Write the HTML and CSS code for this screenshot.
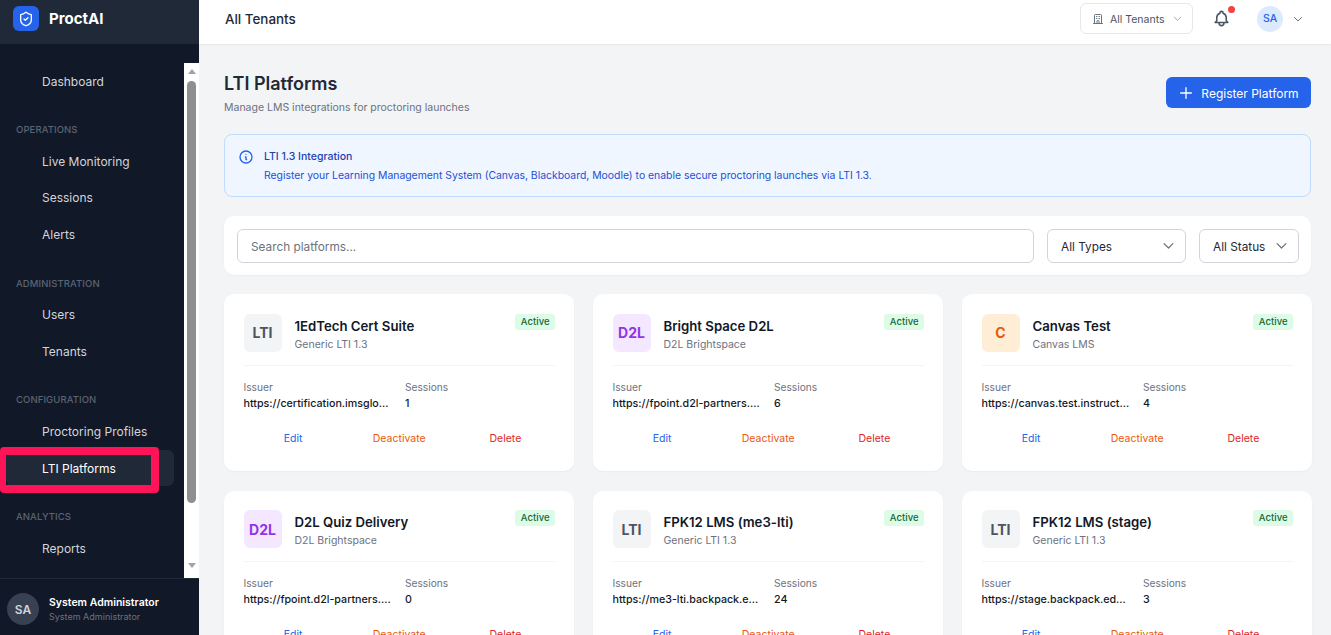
FILE: index.html
```html
<!DOCTYPE html>
<html lang="en">
<head>
    <meta charset="UTF-8">
    <meta name="viewport" content="width=device-width, initial-scale=1.0">
    <title>LTI Platforms</title>
    <link rel="stylesheet" href="styles.css">
</head>
<body>

<div class="app">
    <aside class="sidebar">
        <div class="brand">
            <div class="brand-logo">
                <svg viewBox="0 0 24 24" width="16" height="16" fill="none" stroke="#fff" stroke-width="2" stroke-linecap="round" stroke-linejoin="round"><path d="M20 13c0 5-3.5 7.5-7.66 8.95a1 1 0 0 1-.67-.01C7.5 20.5 4 18 4 13V6a1 1 0 0 1 1-1c2 0 4.5-1.2 6.24-2.72a1.17 1.17 0 0 1 1.52 0C14.51 3.81 17 5 19 5a1 1 0 0 1 1 1z"/><path d="m9 12 2 2 4-4"/></svg>
            </div>
            <span class="brand-name">ProctAI</span>
        </div>

        <div class="nav-wrap">
            <nav class="nav">
                <a class="nav-item">Dashboard</a>
                <div class="nav-label">OPERATIONS</div>
                <a class="nav-item">Live Monitoring</a>
                <a class="nav-item">Sessions</a>
                <a class="nav-item">Alerts</a>
                <div class="nav-label">ADMINISTRATION</div>
                <a class="nav-item">Users</a>
                <a class="nav-item">Tenants</a>
                <div class="nav-label">CONFIGURATION</div>
                <a class="nav-item">Proctoring Profiles</a>
                <a class="nav-item active">LTI Platforms</a>
                <div class="nav-label">ANALYTICS</div>
                <a class="nav-item">Reports</a>
            </nav>
            <div class="scrollbar">
                <span class="arrow-up"></span>
                <span class="thumb"></span>
                <span class="arrow-down"></span>
            </div>
        </div>

        <div class="user-box">
            <div class="user-avatar">SA</div>
            <div>
                <div class="user-name">System Administrator</div>
                <div class="user-role">System Administrator</div>
            </div>
        </div>
    </aside>

    <div class="highlight"></div>

    <div class="content">
        <header class="topbar">
            <div class="topbar-title">All Tenants</div>
            <div class="topbar-right">
                <div class="tenant-select">
                    <svg viewBox="0 0 24 24" width="12" height="12" fill="none" stroke="#6b7280" stroke-width="2" stroke-linecap="round" stroke-linejoin="round"><path d="M19 21V5a2 2 0 00-2-2H7a2 2 0 00-2 2v16m14 0h2m-2 0h-5m-9 0H3m2 0h5M9 7h1m-1 4h1m4-4h1m-1 4h1m-5 10v-5a1 1 0 011-1h2a1 1 0 011 1v5m-4 0h4"/></svg>
                    <span>All Tenants</span>
                    <svg viewBox="0 0 24 24" width="11" height="11" fill="none" stroke="#9ca3af" stroke-width="2" stroke-linecap="round" stroke-linejoin="round"><path d="M19 9l-7 7-7-7"/></svg>
                </div>
                <div class="bell">
                    <svg viewBox="0 0 24 24" width="19" height="19" fill="none" stroke="#4b5563" stroke-width="2" stroke-linecap="round" stroke-linejoin="round"><path d="M15 17h5l-1.405-1.405A2.032 2.032 0 0118 14.158V11a6.002 6.002 0 00-4-5.659V5a2 2 0 10-4 0v.341C7.67 6.165 6 8.388 6 11v3.159c0 .538-.214 1.055-.595 1.436L4 17h5m6 0v1a3 3 0 11-6 0v-1m6 0H9"/></svg>
                    <span class="bell-dot"></span>
                </div>
                <div class="top-avatar">SA</div>
                <svg class="top-chevron" viewBox="0 0 24 24" width="12" height="12" fill="none" stroke="#6b7280" stroke-width="2" stroke-linecap="round" stroke-linejoin="round"><path d="M19 9l-7 7-7-7"/></svg>
            </div>
        </header>

        <main class="main">
            <div class="page-head">
                <div>
                    <h1>LTI Platforms</h1>
                    <p>Manage LMS integrations for proctoring launches</p>
                </div>
                <button class="primary-btn">
                    <svg viewBox="0 0 24 24" width="16" height="16" fill="none" stroke="#fff" stroke-width="2" stroke-linecap="round"><path d="M12 4v16m8-8H4"/></svg>
                    Register Platform
                </button>
            </div>

            <div class="info-box">
                <svg viewBox="0 0 24 24" width="16" height="16" fill="none" stroke="#2563eb" stroke-width="2" stroke-linecap="round" stroke-linejoin="round"><path d="M13 16h-1v-4h-1m1-4h.01M21 12a9 9 0 11-18 0 9 9 0 0118 0z"/></svg>
                <div>
                    <div class="info-title">LTI 1.3 Integration</div>
                    <div class="info-text">Register your Learning Management System (Canvas, Blackboard, Moodle) to enable secure proctoring launches via LTI 1.3.</div>
                </div>
            </div>

            <div class="filters">
                <div class="search">Search platforms...</div>
                <div class="select types">All Types
                    <svg viewBox="0 0 24 24" width="15" height="15" fill="none" stroke="#6b7280" stroke-width="2" stroke-linecap="round" stroke-linejoin="round"><path d="M19 9l-7 7-7-7"/></svg>
                </div>
                <div class="select status">All Status
                    <svg viewBox="0 0 24 24" width="15" height="15" fill="none" stroke="#6b7280" stroke-width="2" stroke-linecap="round" stroke-linejoin="round"><path d="M19 9l-7 7-7-7"/></svg>
                </div>
            </div>

            <div class="cards">
                <div class="card">
                    <div class="card-head">
                        <div class="logo logo-lti">LTI</div>
                        <div class="card-title">
                            <h3>1EdTech Cert Suite</h3>
                            <span>Generic LTI 1.3</span>
                        </div>
                        <span class="badge">Active</span>
                    </div>
                    <div class="card-info">
                        <div><label>Issuer</label><div class="val">https://certification.imsglobal.org</div></div>
                        <div><label>Sessions</label><div class="val">1</div></div>
                    </div>
                    <div class="actions"><a class="edit">Edit</a><a class="deact">Deactivate</a><a class="del">Delete</a></div>
                </div>

                <div class="card">
                    <div class="card-head">
                        <div class="logo logo-d2l">D2L</div>
                        <div class="card-title">
                            <h3>Bright Space D2L</h3>
                            <span>D2L Brightspace</span>
                        </div>
                        <span class="badge">Active</span>
                    </div>
                    <div class="card-info">
                        <div><label>Issuer</label><div class="val">https://fpoint.d2l-partners.brightspace.com</div></div>
                        <div><label>Sessions</label><div class="val">6</div></div>
                    </div>
                    <div class="actions"><a class="edit">Edit</a><a class="deact">Deactivate</a><a class="del">Delete</a></div>
                </div>

                <div class="card">
                    <div class="card-head">
                        <div class="logo logo-canvas">C</div>
                        <div class="card-title">
                            <h3>Canvas Test</h3>
                            <span>Canvas LMS</span>
                        </div>
                        <span class="badge">Active</span>
                    </div>
                    <div class="card-info">
                        <div><label>Issuer</label><div class="val">https://canvas.test.instructure.com</div></div>
                        <div><label>Sessions</label><div class="val">4</div></div>
                    </div>
                    <div class="actions"><a class="edit">Edit</a><a class="deact">Deactivate</a><a class="del">Delete</a></div>
                </div>

                <div class="card">
                    <div class="card-head">
                        <div class="logo logo-d2l">D2L</div>
                        <div class="card-title">
                            <h3>D2L Quiz Delivery</h3>
                            <span>D2L Brightspace</span>
                        </div>
                        <span class="badge">Active</span>
                    </div>
                    <div class="card-info">
                        <div><label>Issuer</label><div class="val">https://fpoint.d2l-partners.brightspace.com</div></div>
                        <div><label>Sessions</label><div class="val">0</div></div>
                    </div>
                    <div class="actions"><a class="edit">Edit</a><a class="deact">Deactivate</a><a class="del">Delete</a></div>
                </div>

                <div class="card">
                    <div class="card-head">
                        <div class="logo logo-lti">LTI</div>
                        <div class="card-title">
                            <h3>FPK12 LMS (me3-lti)</h3>
                            <span>Generic LTI 1.3</span>
                        </div>
                        <span class="badge">Active</span>
                    </div>
                    <div class="card-info">
                        <div><label>Issuer</label><div class="val">https://me3-lti.backpack.education</div></div>
                        <div><label>Sessions</label><div class="val">24</div></div>
                    </div>
                    <div class="actions"><a class="edit">Edit</a><a class="deact">Deactivate</a><a class="del">Delete</a></div>
                </div>

                <div class="card">
                    <div class="card-head">
                        <div class="logo logo-lti">LTI</div>
                        <div class="card-title">
                            <h3>FPK12 LMS (stage)</h3>
                            <span>Generic LTI 1.3</span>
                        </div>
                        <span class="badge">Active</span>
                    </div>
                    <div class="card-info">
                        <div><label>Issuer</label><div class="val">https://stage.backpack.education</div></div>
                        <div><label>Sessions</label><div class="val">3</div></div>
                    </div>
                    <div class="actions"><a class="edit">Edit</a><a class="deact">Deactivate</a><a class="del">Delete</a></div>
                </div>
            </div>
        </main>
    </div>
</div>

</body>
</html>
```

FILE: styles.css
```css
* {
    box-sizing: border-box;
}
html, body {
    margin: 0;
    height: 100%;
    overflow: hidden;
}
body {
    font-family: Inter, "Noto Sans", sans-serif;
    background-color: #f3f4f6;
    color: #111827;
}
.app {
    display: flex;
    height: 635px;
    position: relative;
}

/* sidebar */
.sidebar {
    width: 199px;
    flex-shrink: 0;
    display: flex;
    flex-direction: column;
    background-color: #111827;
}
.brand {
    height: 44px;
    display: flex;
    align-items: flex-start;
    gap: 10px;
    padding: 6px 13px 0;
    background-color: #1f2937;
}
.brand-logo {
    width: 26px;
    height: 25px;
    border-radius: 6px;
    background-color: #2563eb;
    display: flex;
    align-items: center;
    justify-content: center;
}
.brand-name {
    font-size: 15px;
    font-weight: 700;
    line-height: 25px;
    color: #fff;
}
.nav-wrap {
    flex: 1;
    display: flex;
    margin-top: 19px;
    min-height: 0;
}
.nav {
    flex: 1;
    padding: 0 10px 0 6px;
}
.nav-item {
    display: flex;
    align-items: center;
    height: 36px;
    margin-bottom: 0.8px;
    padding-left: 36px;
    border-radius: 6px;
    font-size: 12px;
    color: #d1d5db;
}
.nav-item.active {
    background-color: #1f2937;
    color: #fff;
}
.nav-label {
    margin: 25px 0 7px 10px;
    font-size: 9.5px;
    line-height: 12px;
    font-weight: 500;
    letter-spacing: 0.1px;
    color: #5b6472;
}
.scrollbar {
    width: 15px;
    background-color: #fff;
    display: flex;
    flex-direction: column;
    align-items: center;
}
.arrow-up, .arrow-down {
    width: 0;
    height: 0;
    border-left: 4px solid transparent;
    border-right: 4px solid transparent;
}
.arrow-up {
    margin-top: 6px;
    border-bottom: 5px solid #a3a3a3;
}
.arrow-down {
    margin-top: 60px;
    border-top: 5px solid #a3a3a3;
}
.thumb {
    width: 9px;
    height: 422px;
    margin-top: 7px;
    border-radius: 5px;
    background-color: #8f8f8f;
}
.user-box {
    height: 57px;
    display: flex;
    align-items: center;
    gap: 10px;
    padding: 4px 7px 0;
    border-top: 1px solid #1f2937;
}
.user-avatar {
    width: 32px;
    height: 32px;
    border-radius: 50%;
    background-color: #374151;
    color: #d1d5db;
    display: flex;
    align-items: center;
    justify-content: center;
    font-size: 12px;
    font-weight: 600;
}
.user-name {
    margin-top: 1px;
    font-size: 10.5px;
    font-weight: 600;
    line-height: 15px;
    color: #fff;
}
.user-role {
    font-size: 9px;
    line-height: 14px;
    color: #6b7280;
}

/* red box drawn over the nav */
.highlight {
    position: absolute;
    left: 0;
    top: 447px;
    width: 159px;
    height: 46px;
    border: 8px solid #ff1459;
    border-left-width: 6px;
    border-radius: 4px;
}

/* top bar */
.content {
    flex: 1;
    min-width: 0;
    display: flex;
    flex-direction: column;
}
.topbar {
    height: 44px;
    flex-shrink: 0;
    display: flex;
    align-items: center;
    justify-content: space-between;
    padding: 0 27px 7px 26px;
    background-color: #fff;
    box-shadow: 0 1px 2px rgba(0, 0, 0, 0.06);
    position: relative;
}
.topbar-title {
    font-size: 13.4px;
    font-weight: 500;
    color: #1f2937;
}
.topbar-right {
    display: flex;
    align-items: center;
}
.tenant-select {
    width: 113px;
    height: 31px;
    display: flex;
    align-items: center;
    gap: 6px;
    padding-left: 11px;
    border: 1px solid #e5e7eb;
    border-radius: 6px;
    font-size: 10.5px;
    color: #4b5563;
}
.tenant-select span {
    padding-top: 1px;
}
.tenant-select svg:last-child {
    margin-left: 1px;
}
.bell {
    margin-left: 19px;
    width: 19px;
    height: 19px;
    position: relative;
}
.bell svg {
    display: block;
}
.bell-dot {
    position: absolute;
    top: -3px;
    right: -4px;
    width: 7px;
    height: 7px;
    border-radius: 50%;
    background-color: #ef4444;
}
.top-avatar {
    width: 26px;
    height: 26px;
    margin-left: 26px;
    border-radius: 50%;
    background-color: #dbeafe;
    color: #2563eb;
    display: flex;
    align-items: center;
    justify-content: center;
    font-size: 10.5px;
    font-weight: 500;
}
.top-chevron {
    margin-left: 9px;
}

/* main */
.main {
    flex: 1;
    min-height: 0;
    overflow: hidden;
    padding: 28px 20px 0 25px;
}
.page-head {
    display: flex;
    justify-content: space-between;
    align-items: flex-start;
    margin-bottom: 18px;
}
.page-head h1 {
    margin: 0;
    font-size: 18px;
    line-height: 24px;
    font-weight: 600;
    color: #1f2937;
}
.page-head p {
    margin: 4px 0 0;
    font-size: 10.5px;
    line-height: 16px;
    color: #6b7280;
}
.primary-btn {
    width: 145px;
    height: 31px;
    margin-top: 5px;
    padding: 1px 0 0;
    display: flex;
    align-items: center;
    justify-content: center;
    gap: 7px;
    border: none;
    border-radius: 6px;
    background-color: #2563eb;
    color: white;
    font-family: inherit;
    font-size: 12px;
}
.primary-btn svg {
    margin-top: -1px;
}
.info-box {
    height: 63px;
    display: flex;
    align-items: flex-start;
    gap: 10px;
    padding: 14px 13px 0;
    margin-bottom: 19px;
    background-color: #eff6ff;
    border: 1px solid #bfdbfe;
    border-radius: 8px;
}
.info-box svg {
    flex-shrink: 0;
}
.info-title {
    font-size: 10.5px;
    line-height: 16px;
    font-weight: 500;
    color: #1e40af;
}
.info-text {
    margin-top: 3px;
    font-size: 10.4px;
    line-height: 16px;
    color: #1d4ed8;
}
.filters {
    height: 59px;
    display: flex;
    align-items: center;
    gap: 13px;
    padding: 0 12px 0 13px;
    margin-bottom: 19px;
    background-color: #fff;
    border-radius: 10px;
    box-shadow: 0 1px 2px rgba(0, 0, 0, 0.04);
}
.search, .select {
    height: 34px;
    display: flex;
    align-items: center;
    border: 1px solid #d1d5db;
    border-radius: 6px;
    font-size: 11.8px;
    padding-top: 2px;
}
.search {
    flex: 1;
    padding-left: 13px;
    color: #6b7280;
}
.select {
    justify-content: space-between;
    padding-left: 13px;
    padding-right: 9.5px;
    color: #1f2937;
}
.select svg {
    margin-top: -2px;
}
.types {
    width: 139px;
}
.status {
    width: 100px;
}

/* cards */
.cards {
    display: grid;
    grid-template-columns: repeat(3, 1fr);
    gap: 20px 19px;
}
.card {
    height: 176.5px;
    padding: 19.8px 19px 0 19.5px;
    background-color: #fff;
    border-radius: 10px;
    box-shadow: 0 1px 2px rgba(0, 0, 0, 0.04);
}
.card-head {
    display: flex;
    align-items: flex-start;
    padding-bottom: 11px;
    border-bottom: 1px solid #f3f4f6;
}
.logo {
    width: 38px;
    height: 38px;
    flex-shrink: 0;
    border-radius: 6px;
    display: flex;
    align-items: center;
    justify-content: center;
    font-size: 14px;
    font-weight: 700;
}
.logo-lti {
    background-color: #f3f4f6;
    color: #4b5563;
}
.logo-d2l {
    background-color: #f3e8ff;
    color: #9333ea;
}
.logo-canvas {
    background-color: #ffedd5;
    color: #ea580c;
}
.card-title {
    flex: 1;
    margin-left: 13px;
    padding-top: 3px;
}
.card-title h3 {
    margin: 0;
    font-size: 13.2px;
    line-height: 18px;
    font-weight: 600;
    color: #111827;
}
.card-title span {
    display: block;
    font-size: 10.5px;
    line-height: 19px;
    color: #6b7280;
}
.badge {
    height: 16px;
    padding: 0 5.5px;
    border-radius: 3px;
    background-color: #dcfce7;
    color: #166534;
    font-size: 9.5px;
    font-weight: 500;
    line-height: 16px;
}
.card-info {
    display: grid;
    grid-template-columns: 150px 150px;
    gap: 11.5px;
    margin-top: 13px;
}
.card-info > div {
    min-width: 0;
}
.card-info label {
    display: block;
    font-size: 10.2px;
    line-height: 17px;
    color: #6b7280;
}
.val {
    font-size: 10.7px;
    line-height: 16px;
    font-weight: 500;
    color: #111827;
    white-space: nowrap;
    overflow: hidden;
    text-overflow: ellipsis;
}
.actions {
    display: grid;
    grid-template-columns: repeat(3, 1fr);
    gap: 7px;
    margin-top: 19px;
    font-size: 10.5px;
    line-height: 16px;
    text-align: center;
}
.edit {
    color: #2563eb;
}
.deact {
    color: #ea580c;
}
.del {
    color: #dc2626;
}
```
